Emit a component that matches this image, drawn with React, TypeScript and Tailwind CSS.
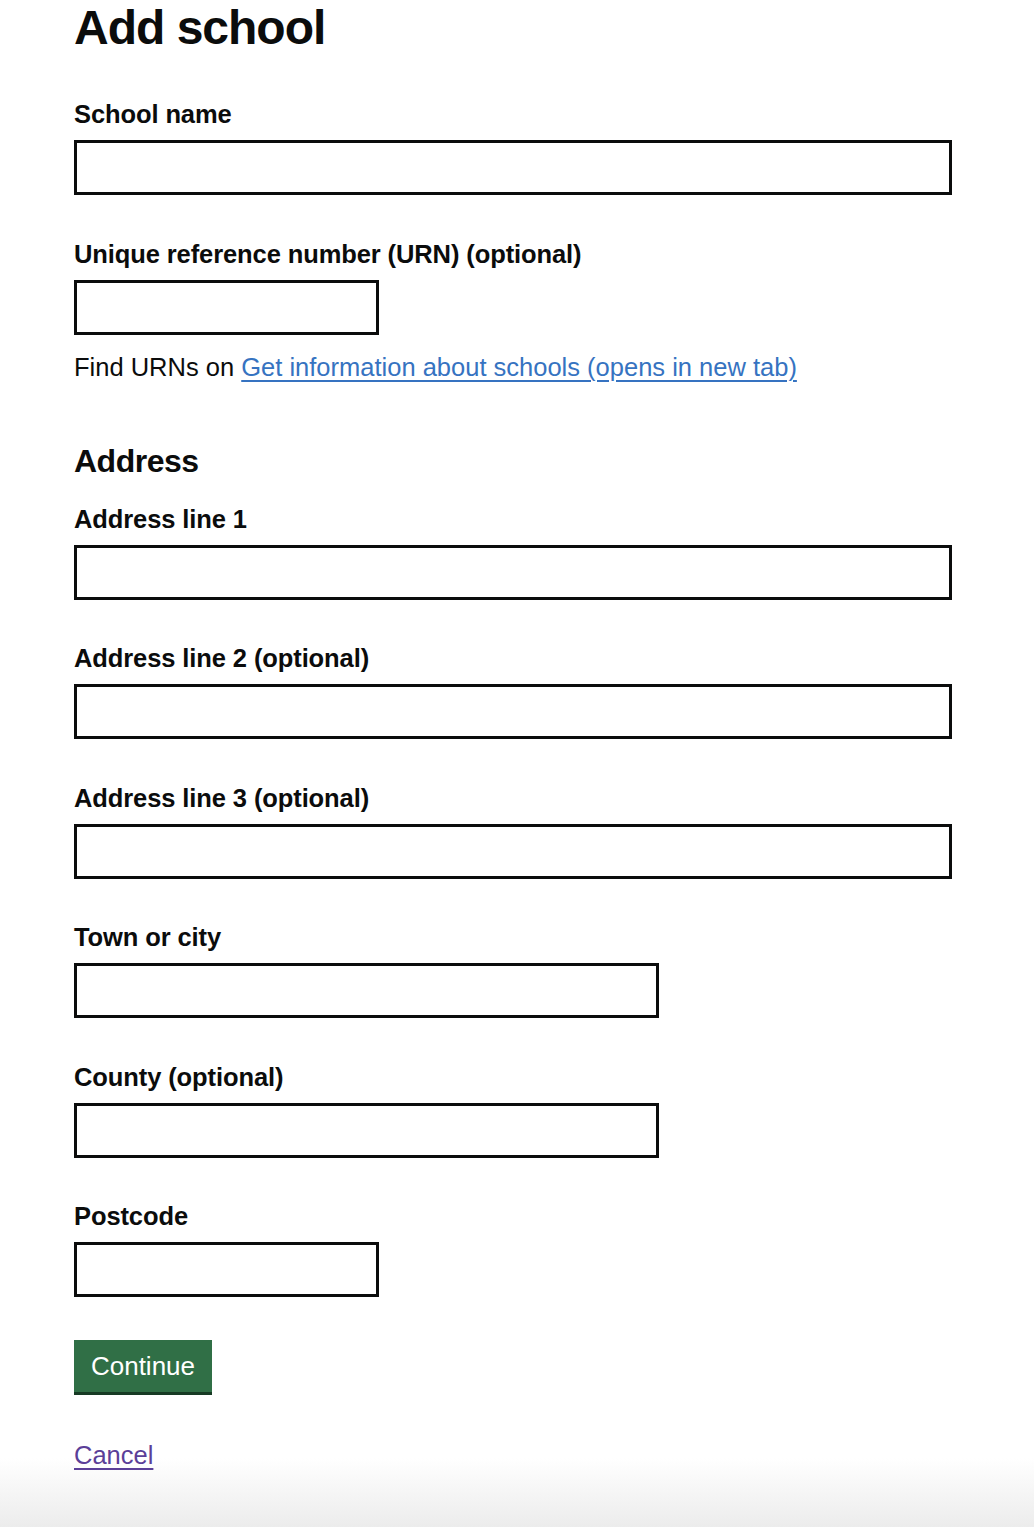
import React from 'react';

type FieldProps = {
  label: string;
  width: string;
  className?: string;
};

const Field: React.FC<FieldProps> = ({ label, width, className = '' }) => (
  <div className={`flex flex-col ${className}`}>
    <label className="text-[25.5px] leading-[32px] font-bold tracking-[-0.1px] text-[#0b0c0c] mb-[10px]">
      {label}
    </label>
    <input
      type="text"
      className={`${width} h-[55px] border-[3px] border-[#0b0c0c] bg-white px-2 text-[25px] outline-none`}
    />
  </div>
);

export default function App() {
  return (
    <div
      className="h-[1527px] overflow-hidden bg-[linear-gradient(to_bottom,#ffffff_1458px,#ececec_1527px)] text-[#0b0c0c]"
      style={{ fontFamily: '"Liberation Sans", Arial, sans-serif' }}
    >
      <main className="pl-[74px] pt-[1px] flex flex-col items-start">
        <h1 className="text-[48px] leading-[54px] font-bold tracking-[-1px] mb-[43px]">Add school</h1>

        <Field label="School name" width="w-[878px]" className="mb-[43px]" />

        <Field label="Unique reference number (URN) (optional)" width="w-[305px]" />
        <p className="mt-[16px] text-[25.5px] leading-[32px]">
          Find URNs on{' '}
          <a
            href="#"
            className="text-[#3673c1] underline decoration-[1.5px] underline-offset-[4px]"
          >
            Get information about schools (opens in new tab)
          </a>
        </p>

        <h2 className="mt-[58px] text-[32px] leading-[40px] font-bold tracking-[-0.5px] mb-[22px]">Address</h2>

        <Field label="Address line 1" width="w-[878px]" className="mb-[42.4px]" />
        <Field label="Address line 2 (optional)" width="w-[878px]" className="mb-[42.4px]" />
        <Field label="Address line 3 (optional)" width="w-[878px]" className="mb-[42.4px]" />
        <Field label="Town or city" width="w-[585px]" className="mb-[42.4px]" />
        <Field label="County (optional)" width="w-[585px]" className="mb-[42.4px]" />
        <Field label="Postcode" width="w-[305px]" />

        <button
          type="button"
          className="mt-[43px] h-[52px] w-[138px] bg-[#306f46] text-white text-[26px] leading-none shadow-[0_3px_0_#173a24]"
        >
          Continue
        </button>

        <a
          href="#"
          className="mt-[47px] text-[25.5px] leading-[32px] text-[#5b3f98] underline decoration-[1.5px] underline-offset-[4px]"
        >
          Cancel
        </a>
      </main>
    </div>
  );
}
